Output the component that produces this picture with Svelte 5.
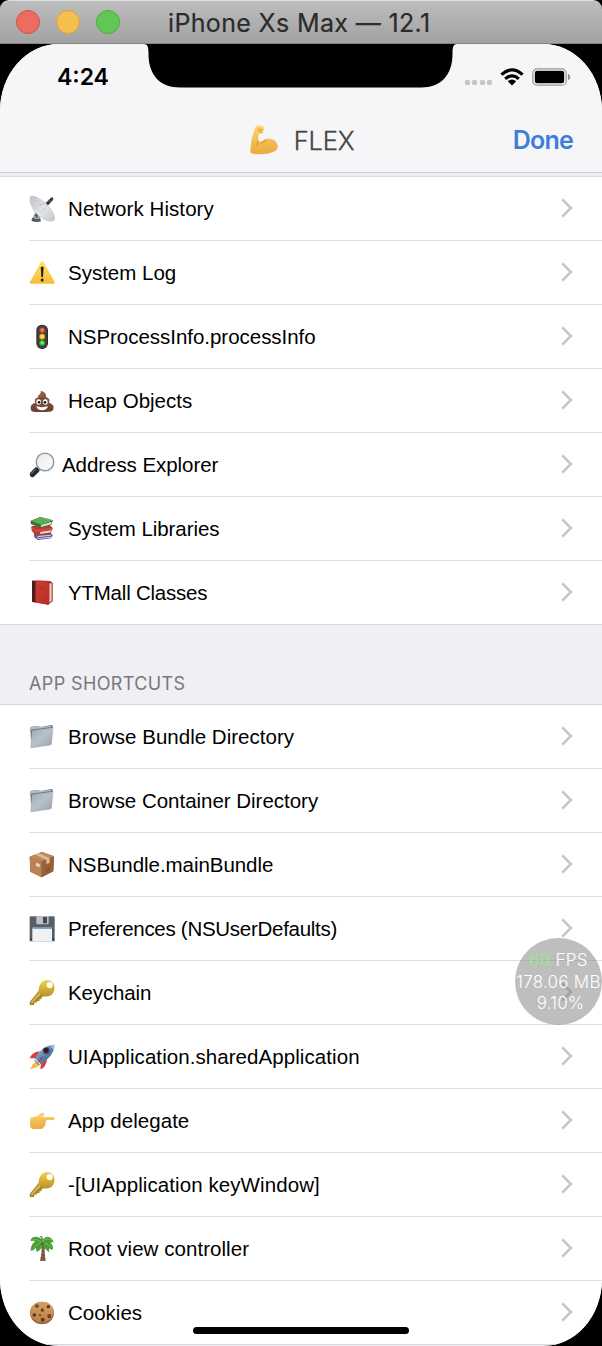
<script>
  const tools = [
    { icon: 'dish', label: 'Network History', track: 0.08 },
    { icon: 'warning', label: 'System Log' },
    { icon: 'traffic', label: 'NSProcessInfo.processInfo', track: -0.03 },
    { icon: 'poop', label: 'Heap Objects' },
    { icon: 'lens', label: 'Address Explorer', tight: true, track: -0.06 },
    { icon: 'books', label: 'System Libraries', track: -0.08 },
    { icon: 'book', label: 'YTMall Classes', track: -0.22 }
  ];
  const shortcuts = [
    { icon: 'folder', label: 'Browse Bundle Directory', track: 0.02 },
    { icon: 'folder', label: 'Browse Container Directory', track: -0.02 },
    { icon: 'box', label: 'NSBundle.mainBundle', track: -0.05 },
    { icon: 'floppy', label: 'Preferences (NSUserDefaults)', track: -0.28 },
    { icon: 'key', label: 'Keychain', track: -0.13 },
    { icon: 'rocket', label: 'UIApplication.sharedApplication', track: 0.07 },
    { icon: 'point', label: 'App delegate', track: 0.04 },
    { icon: 'key', label: '-[UIApplication keyWindow]', track: 0.09 },
    { icon: 'palm', label: 'Root view controller', track: 0.05 },
    { icon: 'cookie', label: 'Cookies' }
  ];
</script>

{#snippet glyph(name)}
  <svg class="emoji" viewBox="0 0 78 78" aria-hidden="true">
    {#if name === 'dish'}
      <path d="M9 66Q20 60 33 65L36 76Q22 80 8 75Z" fill="#4c5868" />
      <path d="M13 60L24 40 35 49 32 68Q23 72 16 68Z" fill="#98a0aa" />
      <path d="M18 58L25 45 29 48 24 67Z" fill="#454e5c" />
      <path d="M4 2C-2 20 14 48 32 62C48 75 71 80 76 71C80 60 67 36 47 19C29 4 8-4 4 2Z" fill="url(#gDish)" stroke="#b3b5ba" stroke-width="1.2" />
      <path d="M5 4Q14 44 74 72M16 2Q34 38 76 62M3 18Q35 38 52 72" fill="none" stroke="#c5c7cb" stroke-width="1" />
      <path d="M28 28L58 18M39 47L62 18" stroke="#a0a4ab" stroke-width="1.500" />
      <path d="M51 20L66 5Q72 2 73 8L71 13 58 27Q53 27 51 20Z" fill="#303640" />
      <path d="M59 12L67 19" stroke="#788090" stroke-width="2" />
    {:else if name === 'warning'}
      <path d="M37 4Q40 2 43 5L77 66Q79 71 74 71H5Q0 71 3 66Z" fill="url(#gWarn)" />
      <path d="M35 22Q40 17 44 22L42 50Q40 53 37 50Z" fill="#29220e" />
      <circle cx="39.500" cy="60" r="4.500" fill="#29220e" />
    {:else if name === 'traffic'}
      <rect x="22" y="2" width="35" height="73" rx="17" fill="#292b2e" />
      <rect x="25" y="4" width="29" height="69" rx="14" fill="#44413d" />
      <circle cx="39.500" cy="19" r="8.500" fill="#d93b38" /><circle cx="39.500" cy="18" r="5" fill="#f7776c" />
      <circle cx="39.500" cy="38" r="8.500" fill="#edab23" /><circle cx="39.500" cy="37" r="5" fill="#fbe35a" />
      <circle cx="39.500" cy="57" r="8.500" fill="#24b93c" /><circle cx="39.500" cy="56" r="5" fill="#6ff067" />
    {:else if name === 'poop'}
      <path d="M35 8C47 11 53 18 51 27C61 30 63 37 60 44C71 47 76 54 73 64C70 73 59 72 39 72S7 74 5 63C4 53 9 46 19 45C15 36 19 31 27 28C25 20 38 19 35 8Z" fill="url(#gPoop)" />
      <path d="M26 31Q39 36 51 27" fill="none" stroke="#6b4231" stroke-width="2.500" />
      <ellipse cx="29" cy="42" rx="7" ry="8" fill="#fff" /><ellipse cx="49" cy="42" rx="7" ry="8" fill="#fff" />
      <circle cx="30" cy="43" r="4" fill="#201916" /><circle cx="48" cy="43" r="4" fill="#201916" />
      <path d="M22 55Q39 60 57 55Q53 67 39 67T22 55Z" fill="#fff" />
    {:else if name === 'lens'}
      <path d="M25 43L34 52 29 57 21 49Z" fill="#8a8e92" />
      <path d="M19 46Q27 46 32 57L14 75Q8 77 4 73Q1 68 3 63Z" fill="#262b35" />
      <path d="M20 51L7 65" stroke="#737a89" stroke-width="3" />
      <circle cx="48" cy="30" r="26.500" fill="url(#gLens)" stroke="#8d9196" stroke-width="4" />
      <circle cx="48" cy="30" r="23" fill="none" stroke="#dfe4e6" stroke-width="2" />
    {:else if name === 'books'}
      <path d="M15 53L64 50 71 57 66 67 27 72 16 64Z" fill="#49549c" />
      <path d="M21 60L67 56V65L27 69Z" fill="#d5d0e2" />
      <path d="M17 55L29 65 70 60" fill="none" stroke="#59549b" stroke-width="3" />
      <path d="M8 30L62 27 71 36 65 53 21 59 8 44Z" fill="#bb3936" />
      <path d="M34 48L67 43 65 49 34 54Z" fill="#e9dfd7" />
      <path d="M6 34L22 45 70 37" fill="none" stroke="#d55041" stroke-width="4" />
      <path d="M5 14L34 3 72 13 67 27 35 36 5 24Z" fill="#34763a" />
      <path d="M36 27L68 17 67 25 36 33Z" fill="#d7decf" />
      <path d="M6 14L34 3 72 13 37 26Z" fill="#63ad50" />
    {:else if name === 'book'}
      <path d="M10 2L63 3 71 9V64L57 74 9 65Z" fill="#982622" />
      <path d="M61 11L68 9V62L61 68Z" fill="#e4d6c8" />
      <path d="M9 2L61 7 60 74 9 66Z" fill="url(#gBook)" />
      <path d="M9 2L20 3 19 67 9 65Z" fill="#4a211f" />
      <path d="M10 1L63 3 70 9 59 8Z" fill="#bb3229" />
      <path d="M29 21L47 23M31 27L45 28" stroke="#ab3229" stroke-width="2" />
    {:else if name === 'folder'}
      <path d="M4 12Q4 8 8 8L26 6 34 9 68 3Q71 3 71 7L66 60 7 71Z" fill="#68737f" />
      <path d="M5 9L27 6 34 9 67 5 66 11 6 18Z" fill="#b2bcc4" />
      <path d="M9 21Q9 18 13 17L71 10Q74 10 73 14L68 60Q67 63 64 64L8 73Q4 74 4 70Z" fill="url(#gFolder)" />
      <path d="M8 18L71 10" stroke="#56616e" stroke-width="2" />
    {:else if name === 'box'}
      <path d="M39 0L75 13 73 58 38 76 4 59 2 14Z" fill="#9c673f" />
      <path d="M2 14L38 28V76L4 59Z" fill="#b9824f" />
      <path d="M38 28L75 13 73 58 38 76Z" fill="#966239" />
      <path d="M39 0L75 13 38 28 2 14Z" fill="#bf895a" />
      <path d="M20 8L30 4 62 19V33L52 36V24Z" fill="#dcbc98" />
      <path d="M21 32L32 36V46L21 42Z" fill="#e5ddd1" />
      <path d="M52 53L62 48M53 58L63 53" stroke="#704a2d" stroke-width="2" />
    {:else if name === 'floppy'}
      <path d="M2 1H77V76H2Z" fill="#595e65" />
      <path d="M22 1H59V22Q59 25 55 25H25Q22 25 22 22Z" fill="#bfc3c8" />
      <rect x="42" y="3" width="12" height="19" rx="1" fill="#444950" />
      <path d="M10 35H69V76H10Z" fill="#eff1f3" /><path d="M10 35H69V39H10Z" fill="#70a9df" />
      <path d="M4 67H8V71H4ZM71 67H75V71H71Z" fill="#202429" />
    {:else if name === 'key'}
      <path d="M31 31L46 46 37 53 38 58 32 57 31 63 25 63 23 68 17 67 15 75 3 75 2 66Z" fill="#a9842a" />
      <path d="M33 34L39 40 11 68H4Z" fill="#d5b446" />
      <path fill-rule="evenodd" d="M53 0C71-1 80 15 76 31C72 47 56 52 44 49C31 46 26 33 31 19C35 7 43 1 53 0ZM62 6A9 9 0 1 0 62 24A9 9 0 1 0 62 6Z" fill="url(#gKey)" />
    {:else if name === 'rocket'}
      <path d="M22 52L3 75 21 71 34 62Z" fill="#f8bf3b" /><path d="M24 52L3 75 13 61Z" fill="#e77a2c" />
      <path d="M32 22Q14 24 5 37L2 43 22 43ZM54 46Q53 61 42 73L34 75 36 58Z" fill="#dd3e38" />
      <path d="M76 2Q53 3 38 17 22 31 16 50L29 63Q48 55 59 41 77 22 76 2Z" fill="url(#gRocket)" />
      <path d="M62 4Q70 2 76 2 77 10 74 18Q67 12 62 4Z" fill="#9dbcd8" />
      <path d="M18 45L33 60" stroke="#e3ded4" stroke-width="4" />
      <circle cx="52" cy="20" r="10" fill="#7e3440" /><circle cx="51" cy="19" r="7" fill="#1c222d" />
      <path d="M28 50Q35 40 45 36 39 47 25 58Z" fill="#ba3035" />
    {:else if name === 'point'}
      <path d="M4 29L25 25Q36 13 43 14Q49 18 40 27L74 27Q79 30 76 35Q74 37 67 36L50 37Q53 42 49 47 51 53 45 56 44 62 36 63L12 63Q3 61 3 51Z" fill="url(#gHand)" />
      <path d="M34 36L50 37M36 47L48 47M34 56L44 56" fill="none" stroke="#e3aa42" stroke-width="2" />
    {:else if name === 'palm'}
      <path d="M38 24L48 25Q45 46 50 75L33 75Q39 52 38 24Z" fill="#886246" />
      <path d="M39 35L46 37M39 45L47 48M38 55L48 58M36 65L49 67" stroke="#5c4331" stroke-width="2.500" />
      <path d="M39 10Q26-2 12 4 4 8 5 16Q11 12 18 17Q5 24 5 45Q15 44 20 35L24 48Q37 42 41 25Q47 40 60 49Q62 44 60 37L70 42Q76 30 64 20L74 18Q69 3 55 2 47 2 43 10L39 1 32 0Z" fill="#4a9d37" />
      <path d="M10 12Q25 7 38 19Q54 3 69 12M12 37Q22 23 37 21M47 22Q60 24 68 34" fill="none" stroke="#74bf4b" stroke-width="3" />
      <circle cx="39" cy="23" r="4" fill="#5e5930" />
    {:else if name === 'cookie'}
      <ellipse cx="39" cy="39" rx="36" ry="34" fill="#9a6738" /><ellipse cx="39" cy="36" rx="35" ry="31" fill="url(#gCookie)" />
      <g fill="#5d3622"><circle cx="24" cy="18" r="5.500" /><circle cx="58" cy="20" r="5" /><circle cx="40" cy="30" r="5" /><circle cx="16" cy="45" r="5.500" /><circle cx="41" cy="59" r="6" /><circle cx="61" cy="48" r="6" /><circle cx="33" cy="46" r="3" /></g>
      <g fill="#ba8053"><circle cx="25" cy="16" r="2" /><circle cx="41" cy="28" r="2" /><circle cx="60" cy="46" r="2" /></g>
    {/if}
  </svg>
{/snippet}

{#snippet row(item)}
  <li class:tight={item.tight}>
    {@render glyph(item.icon)}
    <span class="label" style:letter-spacing={`${item.track ?? 0}px`}>{item.label}</span>
    <svg class="chevron" viewBox="0 0 12 20" aria-hidden="true"><path d="M1.300 1.400L10 10L1.300 18.600" /></svg>
  </li>
{/snippet}

<svg class="paints" aria-hidden="true">
  <defs>
    <linearGradient id="gDish" x1="0" y1="0" x2="1" y2="1"><stop stop-color="#bfc1c5" /><stop offset=".55" stop-color="#e6e7ea" /><stop offset="1" stop-color="#c4c5ca" /></linearGradient>
    <linearGradient id="gWarn" x2="0" y2="1"><stop stop-color="#ffe06a" /><stop offset="1" stop-color="#f5bd38" /></linearGradient>
    <linearGradient id="gPoop" x2="0" y2="1"><stop stop-color="#96634a" /><stop offset="1" stop-color="#694030" /></linearGradient>
    <linearGradient id="gLens" x2="1" y2="1"><stop stop-color="#e6ebed" /><stop offset="1" stop-color="#fdfdfd" /></linearGradient>
    <linearGradient id="gBook" x2="1" y2="1"><stop stop-color="#cf4034" /><stop offset="1" stop-color="#b92d29" /></linearGradient>
    <linearGradient id="gFolder" x2="1" y2="1"><stop stop-color="#9ba6b2" /><stop offset=".5" stop-color="#bac1ca" /><stop offset="1" stop-color="#909ba8" /></linearGradient>
    <linearGradient id="gKey" x2="0" y2="1"><stop stop-color="#f0d34c" /><stop offset="1" stop-color="#bb9024" /></linearGradient>
    <linearGradient id="gRocket" x1="0" y1="0" x2="1" y2="1"><stop stop-color="#a9c6df" /><stop offset=".5" stop-color="#5589bd" /><stop offset="1" stop-color="#2c527f" /></linearGradient>
    <linearGradient id="gHand" x2="0" y2="1"><stop stop-color="#ffd56a" /><stop offset="1" stop-color="#eba941" /></linearGradient>
    <linearGradient id="gCookie" x2="0" y2="1"><stop stop-color="#d6a065" /><stop offset="1" stop-color="#b9824b" /></linearGradient>
  </defs>
</svg>

<div class="window">
  <div class="titlebar">
    <div class="lights"><i class="close"></i><i class="min"></i><i class="max"></i></div>
    <h1>iPhone Xs Max — 12.1</h1>
  </div>

  <div class="screen">
    <svg class="notch" viewBox="0 0 313 44" aria-hidden="true"><path d="M0 0C4 0 4.500 4 4.500 10C4.500 31 16 43.500 36 43.500H277C297 43.500 308.500 31 308.500 10C308.500 4 309 0 313 0Z" /></svg>
    <div class="status">
      <time>4:24</time>
      <div class="indicators">
        <span class="dots"><i></i><i></i><i></i><i></i></span>
        <svg class="wifi" viewBox="0 0 24 18" aria-hidden="true">
          <path d="M1.400 6.600Q12-3 22.600 6.600M5.200 10.900Q12 5 18.800 10.900" fill="none" stroke="#000" stroke-width="3.200" />
          <path d="M7.800 13.300Q12 9.500 16.200 13.300L12 17.500Z" fill="#000" />
        </svg>
        <svg class="battery" viewBox="0 0 39 18" aria-hidden="true">
          <rect x=".8" y=".8" width="33.400" height="16.400" rx="4.500" fill="#fff" stroke="#929294" stroke-width="1.200" />
          <rect x="2.800" y="2.800" width="29.400" height="12.400" rx="2.200" />
          <path d="M36 5.800Q38.300 6.500 38.300 9T36 12.200Z" fill="#929294" />
        </svg>
      </div>
    </div>
    <header>
      <div class="title">
        <svg viewBox="0 0 84 90" aria-hidden="true">
          <path d="M14 14Q15 3 25 1L36 3Q44 6 42 14L39 24Q34 29 27 25L24 46Q30 52 37 48Q49 38 63 42Q79 45 83 61Q85 75 70 81Q44 92 10 86Q1 86 1 78Q2 43 14 14Z" fill="url(#gHand)" />
          <path d="M25 10Q28 18 36 13M24 18Q29 22 34 17M24 47Q23 54 20 61M34 57Q39 47 49 46" fill="none" stroke="#ca8526" stroke-width="2.500" />
        </svg>
        <span>FLEX</span>
      </div>
      <button>Done</button>
    </header>
    <div class="gap"></div>
    <ul>{#each tools as item}{@render row(item)}{/each}</ul>
    <h2>APP SHORTCUTS</h2>
    <ul>{#each shortcuts as item}{@render row(item)}{/each}</ul>
    <div class="home"></div>
    <div class="monitor">
      <p><b>60</b> FPS</p>
      <p>178.06 MB</p>
      <p class="cpu">9.10%</p>
    </div>
  </div>
</div>

<style>
  :global(body) { background: #000; }
  .paints { position: absolute; width: 0; height: 0; }
  .window { width: 602px; height: 1346px; overflow: hidden; background: #000; font-family: Inter, "Liberation Sans", sans-serif; color: #000; }
  .titlebar { box-sizing: border-box; height: 44px; display: grid; grid-template-columns: 168px 1fr; align-items: center; background: linear-gradient(#bdbdbd, #a2a2a2); border-top: 1px solid #dedede; border-bottom: 1px solid #858585; border-radius: 9px 9px 0 0; }
  .lights { display: flex; gap: 16px; padding-left: 16px; }
  .lights i { box-sizing: border-box; width: 24px; height: 24px; border-radius: 50%; border: 1px solid; }
  .close { background: #ed6b60; border-color: #cc554e !important; }
  .min { background: #f5bf4f; border-color: #d7a142 !important; }
  .max { background: #61c654; border-color: #4dab42 !important; }
  h1 { margin: 2px 0 0; font-size: 25px; line-height: 30px; font-weight: 400; letter-spacing: .35px; color: #2b2b2b; white-space: nowrap; -webkit-text-stroke: .2px #2b2b2b; }
  .screen { position: relative; height: 1302px; overflow: hidden; border-radius: 59px / 67px; background: #efeff4; }
  .notch { position: absolute; left: 144px; top: 0; width: 313px; height: 44px; }
  .status { box-sizing: border-box; height: 64px; padding: 2px 31px 0 57px; display: flex; justify-content: space-between; align-items: center; position: relative; }
  time { font-size: 23px; font-weight: 600; letter-spacing: 0; }
  .indicators { display: flex; align-items: center; }
  .dots { display: flex; gap: 2.500px; margin: 10px 8px 0 0; }
  .dots i { width: 5px; height: 5px; border-radius: 1.500px; background: #c6c6c8; }
  .wifi { width: 24px; height: 18px; margin-right: 8px; }
  .battery { width: 39px; height: 18px; }
  header { box-sizing: border-box; height: 129px; margin-top: -64px; padding: 64px 29px 0; display: grid; grid-template-columns: 1fr auto 1fr; align-items: center; border-bottom: 1px solid #ceced3; background: #f6f6f8; }
  .status, .notch { z-index: 1; }
  .title { grid-column: 2; display: flex; align-items: center; gap: 16px; padding-left: 2px; font-size: 25.500px; font-weight: 300; letter-spacing: -.2px; color: #444; -webkit-text-stroke: .3px #444; }
  .title svg { width: 28px; height: 30px; }
  button { justify-self: end; padding: 0; border: 0; background: none; font: 600 25px/30px Inter, sans-serif; letter-spacing: -.8px; color: #3d7edb; }
  .gap { box-sizing: border-box; height: 4px; border-bottom: 1px solid #dcdce1; }
  ul { list-style: none; margin: 0; padding: 0; background: #fff; }
  li { box-sizing: border-box; height: 64px; padding-right: 29px; margin-left: 29px; display: flex; align-items: center; border-bottom: 1px solid #e0e0e2; }
  li:last-child { margin-left: 0; padding-left: 29px; border-color: #d8d8dc; }
  .emoji { width: 26px; height: 26px; margin-right: 13px; overflow: visible; }
  .tight .emoji { margin-right: 7px; }
  .label { flex: 1; font: 20.500px/26px "Liberation Sans", Arial, sans-serif; white-space: nowrap; }
  .chevron { width: 12px; height: 20px; margin-bottom: 2px; fill: none; stroke: #c5c5ca; stroke-width: 2.500; }
  h2 { box-sizing: border-box; height: 80px; margin: 0; padding: 47px 29px 0; font-size: 18px; line-height: 24px; font-weight: 400; letter-spacing: .38px; color: #77777c; border-bottom: 1px solid #d8d8dc; }
  .home { position: absolute; left: 193px; bottom: 12px; width: 216px; height: 7px; border-radius: 4px; background: #000; }
  .monitor { position: absolute; left: 515px; top: 894px; width: 87px; height: 87px; box-sizing: border-box; padding-top: 11px; border-radius: 50%; background: rgba(125, 125, 125, .5); color: #fff; font-size: 17px; font-weight: 300; letter-spacing: .25px; display: flex; flex-direction: column; align-items: center; white-space: nowrap; }
  .monitor p { margin: 0; height: 22px; line-height: 22px; }
  .monitor b { font-weight: 300; color: #8cf283; }
  .monitor .cpu { padding-left: 4px; line-height: 20px; }
</style>
